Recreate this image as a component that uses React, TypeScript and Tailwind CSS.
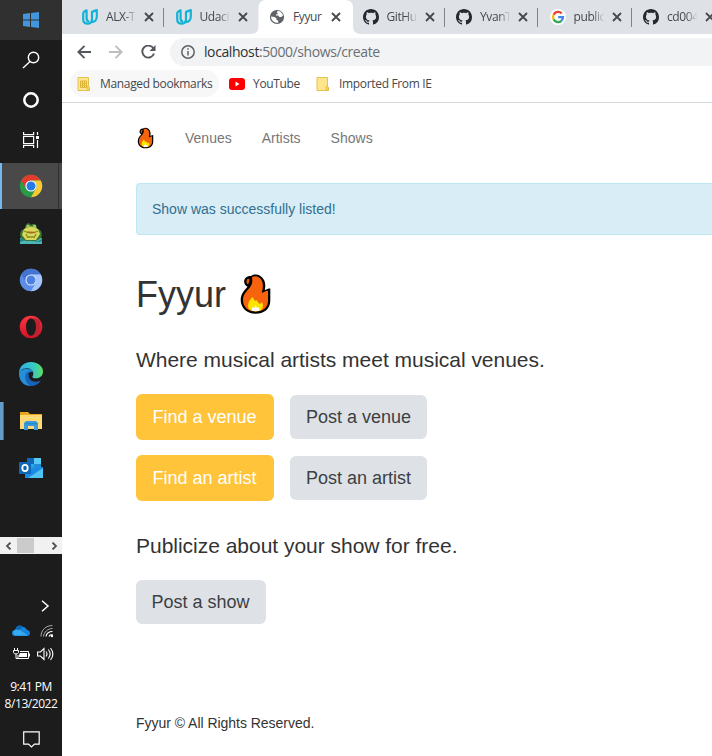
import React from "react";

const ui = "font-['Open_Sans',sans-serif]";

function Udacity() {
  return (
    <svg width="16" height="16" viewBox="0 0 16 16" fill="none" stroke="#15b2d8" strokeWidth="2.2" strokeLinejoin="round">
      <path d="M1.200 3.300 4.600 1.300v8.200q0 2.700 2.600 3.400" />
      <path d="M1.200 3.300v6.700q0 4.700 4.300 4.700c3.200 0 4.500-2 4.500-5V2.900l4.800-1.800v6.500c0 3.500-2.200 5.600-5.400 5.500" />
    </svg>
  );
}

function Github() {
  return (
    <svg width="16" height="16" viewBox="0 0 16 16" fill="#24292f">
      <path d="M8 0C3.58 0 0 3.58 0 8c0 3.54 2.29 6.53 5.47 7.59.4.07.55-.17.55-.38 0-.19-.01-.82-.01-1.49-2.01.37-2.53-.49-2.69-.94-.09-.23-.48-.94-.82-1.13-.28-.15-.68-.52-.01-.53.63-.01 1.08.58 1.23.82.72 1.21 1.87.87 2.33.66.07-.52.28-.87.51-1.07-1.78-.2-3.64-.89-3.64-3.95 0-.87.31-1.59.82-2.15-.08-.2-.36-1.02.08-2.12 0 0 .67-.21 2.2.82.64-.18 1.32-.27 2-.27s1.36.09 2 .27c1.53-1.04 2.2-.82 2.2-.82.44 1.1.16 1.92.08 2.12.51.56.82 1.27.82 2.15 0 3.07-1.87 3.75-3.65 3.95.29.25.54.73.54 1.48 0 1.07-.01 1.93-.01 2.2 0 .21.15.46.55.38A8.01 8.01 0 0 0 16 8c0-4.42-3.58-8-8-8Z" />
    </svg>
  );
}

function Globe() {
  return (
    <svg width="16" height="16" viewBox="0 0 16 16">
      <circle cx="8" cy="8" r="7.100" fill="#5f6368" />
      <path d="M8 2.600 9.400 1.900c2.600.5 4.200 2.300 4.600 4.600l-1.600 1.500-2-.1-1.200-1.400H7V5.200h1.700V4L8 3.700Z" fill="#fff" />
      <path d="M2 7.600 5.500 8l2 1.500v1.400l1.700.5v2.400c-3.900.5-7.100-2.200-7.200-6.200Z" fill="#fff" />
    </svg>
  );
}

function Google() {
  return (
    <svg width="16" height="16" viewBox="0 0 16 16">
      <circle cx="8" cy="8" r="8" fill="#fff" />
      <g fill="none" strokeWidth="2.3">
        <path d="M11.7 4.4A5 5 0 0 0 3.600 5.700" stroke="#ea4335" />
        <path d="M3.600 5.700a5 5 0 0 0 0 4.700" stroke="#fbbc05" />
        <path d="M3.600 10.400a5 5 0 0 0 7.800 1.400" stroke="#34a853" />
        <path d="M11.400 11.800A5 5 0 0 0 13 8.100H8.200" stroke="#4285f4" />
      </g>
    </svg>
  );
}

function Close() {
  return (
    <svg className="shrink-0" width="10" height="10" viewBox="0 0 10 10" stroke="#45494d" strokeWidth="1.8">
      <path d="m1 1 8 8M9 1 1 9" />
    </svg>
  );
}

type TabProps = { icon: React.ReactNode; title: string; active?: boolean; divider?: boolean };

function Tab({ icon, title, active, divider }: TabProps) {
  return (
    <div className="relative flex h-[34px] w-[93.5px] shrink-0 items-center pl-[11.5px]">
      {active && (
        <svg className="absolute -left-[7px] top-0" width="110" height="34" viewBox="0 0 110 34" fill="#fff">
          <path d="M0 34q7.500 0 7.500-8V8q0-8 8-8H94q8 0 8 8v18q0 8 8 8Z" />
        </svg>
      )}
      <div className="relative shrink-0">{icon}</div>
      <div className="relative ml-2 w-[31px] shrink-0">
        <div className={"w-[31px] whitespace-nowrap text-[12px] tracking-[-0.4px] text-[#45494d]" + (active ? "" : " [mask-image:linear-gradient(to_right,#000_60%,transparent_98%)]")}>{title}</div>
      </div>
      <div className="relative ml-[7px] flex shrink-0"><Close /></div>
      {divider && <div className="absolute right-0 top-[8px] h-[19px] w-px bg-[#808389]" />}
    </div>
  );
}

function Note({ grid }: { grid?: boolean }) {
  return (
    <svg className="shrink-0" width="14" height="16" viewBox="0 0 14 16">
      <path d="M1 1.500h10.500v9l1 1v3H1Z" fill="#ffe58c" stroke="#e5c14f" />
      <path d="M10 14v-3.500q1.500-1 2.500 1V14Z" fill="#f9d667" stroke="#e0b83d" strokeWidth=".7" />
      {grid && <path d="M3.500 5h6v6.500h-6Zm0 2.200h6m-6 2.200h6M5.500 5v6.500m2-6.500v6.500" fill="none" stroke="#dfb43a" />}
    </svg>
  );
}

function Flame({ className }: { className: string }) {
  return (
    <svg className={className} viewBox="0 0 32 42" strokeLinejoin="round">
      <path d="M11.500 3C16 0 22 2 24.500 7c1.500 3 1.500 6 .8 10.200 2-1.200 3.400-1.700 5.500-1.700V28c0 8-6.500 12.800-14.800 12.800S1.200 35 1.200 27c0-6 3.600-9.500 6.800-13.200C4.500 12.500 3.800 8 5.500 5.500 7 3.500 9 3 11.500 3Z" fill="#000" />
      <path d="M12.500 4c4-1.700 8.200.2 10 4 1.600 3.700.7 8-.2 12 2.200-1.200 3.900-2 6.200-2.300V28c0 6.500-5.200 10.500-12.500 10.500S3.500 34 3.500 27c0-5.500 3.400-8.500 6.500-12 2.500-3 3.300-5.500 2.500-11Z" fill="#f7630c" />
      <path d="M7.500 6.500C8.500 5.500 10 5.200 10 6.500c0 2-.5 3.500-1.500 5C6.700 10.500 6.500 8 7.500 6.500Z" fill="#d9560d" />
      <path d="M9 35.500c-1.300-4.500.7-8.500 4-11.500l2.500 4 1.500-1 2 3 1.500 1 2-2c2 4 .5 7-1.500 8.500-4 1.500-8.500.8-12-2Z" fill="#fde300" />
      <path d="m12 37.500 1-3.500 1.700 1 1.300-3 1.500 3 1.500-1 1 3.500q-4 1.500-8 0" fill="#fff" />
    </svg>
  );
}

function Chrome({ blue }: { blue?: boolean }) {
  return (
    <svg width="24" height="24" viewBox="0 0 24 24">
      <circle cx="12" cy="12" r="11.200" fill={blue ? "#5b8ce6" : "#2a9c48"} />
      <path d="M2.300 6.400A11.200 11.200 0 0 1 21.700 6.400H12A5.600 5.600 0 0 0 7.150 14.800Z" fill={blue ? "#4474d2" : "#e33b2e"} />
      <path d="M21.700 6.400A11.200 11.200 0 0 1 12 23.200L16.850 14.800A5.600 5.600 0 0 0 12 6.400Z" fill={blue ? "#a5c6fa" : "#fcc934"} />
      <circle cx="12" cy="12" r="5.600" fill={blue ? "#dce9ff" : "#fff"} />
      <circle cx="12" cy="12" r="4.500" fill={blue ? "#4b80df" : "#2779e7"} />
    </svg>
  );
}

function Frog() {
  return (
    <svg width="24" height="24" viewBox="0 0 24 24">
      <path d="M1 17h22v6H1Z" fill="#4bb7b5" />
      <path d="M1 18q5-3 10 1t12-1v2q-6 2-11 0T1 21Z" fill="#247f8b" />
      <path d="M2 17c-2-5 0-9 4-9 0-6 4-7 6-4 4-3 6 0 6 4 4 0 6 4 4 9l-5 3H7Z" fill="#3c7739" />
      <path d="M5 8q7-5 14 0l2 5-4 6H7l-4-5Z" fill="#d8d859" />
      <path d="M5 10q7 4 14 0M7 13l2 4m8-4-2 4m-6-1h6" fill="none" stroke="#8a8d27" strokeWidth="1.300" />
      <circle cx="9" cy="5.500" r="1.700" fill="#acc65e" />
      <circle cx="15.500" cy="5.500" r="1.700" fill="#acc65e" />
      <path d="m8 11 8 .3" stroke="#ad5327" />
    </svg>
  );
}

function Opera() {
  return (
    <svg width="24" height="24" viewBox="0 0 24 24">
      <defs><linearGradient id="op" x2="0" y2="1"><stop stopColor="#ff3444" /><stop offset="1" stopColor="#d01425" /></linearGradient></defs>
      <circle cx="12" cy="12" r="11.300" fill="url(#op)" />
      <path d="M14 3.500c3-1 5 0 7 3q1.500 5.500 0 11c-2 3-4 4-7 3Z" fill="#c0222f" />
      <ellipse cx="12" cy="12" rx="5" ry="8.800" fill="#1c1c1c" />
    </svg>
  );
}

function Edge() {
  return (
    <svg width="26" height="26" viewBox="0 0 24 24">
      <defs>
        <linearGradient id="ea"><stop stopColor="#30aee5" /><stop offset=".6" stopColor="#36cac7" /><stop offset="1" stopColor="#61dc5b" /></linearGradient>
        <linearGradient id="eb" x2="0" y2="1"><stop stopColor="#228fdc" /><stop offset="1" stopColor="#114a9c" /></linearGradient>
      </defs>
      <path d="M1 11C1 5 6 1 12 1c7 0 12 5 11 10-1 4-4 5-7 5-3 0-3-1-2-3 1-4-3-7-7-6-3 0-5 2-6 4Z" fill="url(#ea)" />
      <path d="M1 11c2-5 11-5 13-1-5-1-7 4-4 8 2 3 7 3 11 0-2 3-5 5-9 5C5 23 1 18 1 11Z" fill="url(#eb)" />
      <path d="M9 10c-5 4-2 11 3 13 4 0 7-2 9-5-6 3-12 0-11-5Z" fill="#1763b7" />
      <path d="M1 11c2-3 6-4 9-2-3 1-4 4-3 8 1 3 2 5 5 6C5 23 1 18 1 11Z" fill="#278fd9" />
    </svg>
  );
}

function Folder() {
  return (
    <svg width="24" height="24" viewBox="0 0 24 24">
      <path d="M1 3h8l2 2h12v4H1Z" fill="#e8a61b" />
      <path d="M1 6h22v14H1Z" fill="#ffd974" />
      <path d="M5 21v-7l2-2h10l2 2v7h-4v-4H9v4Z" fill="#3b9ade" />
      <path d="M6 14h12v1.200H6Z" fill="#2d88c6" />
    </svg>
  );
}

function Outlook() {
  return (
    <svg width="26" height="24" viewBox="0 0 26 24">
      <path d="M9 2h14v13H9Z" fill="#28a8ea" />
      <path d="M9 2h7v6H9Z" fill="#1267b4" />
      <path d="M16 2h7v6h-7Z" fill="#57caf5" />
      <path d="M16 8h7v6h-7Z" fill="#238ed7" />
      <path d="M7 12 25 11v11H7Z" fill="#1a8be0" />
      <path d="M10 22 25 12v10Z" fill="#50c3f2" />
      <path d="M1 6h12v12H1Z" fill="#0e68b9" />
      <ellipse cx="7" cy="12" rx="2.700" ry="3.200" fill="none" stroke="#fff" strokeWidth="1.800" />
    </svg>
  );
}

function AppSlot({ children, state }: { children: React.ReactNode; state?: "active" | "open" }) {
  return (
    <div className={"relative mb-px flex h-[46px] shrink-0 items-center justify-center " + (state === "active" ? "bg-[#494949]" : "")}>
      {state === "active" && <><i className="absolute left-0 top-0 h-full w-[2px] bg-[#76b9ed]" /><i className="absolute right-[3px] top-0 h-full w-px bg-[#303030]" /></>}
      {state === "open" && <><i className="absolute left-0 top-[4px] h-[38px] w-[3px] bg-[#659bc7]" /><i className="absolute left-[3px] top-[4px] h-[38px] w-px bg-[#3b6e99]" /></>}
      {children}
    </div>
  );
}

function Taskbar() {
  return (
    <aside className={"flex h-[756px] w-[62px] shrink-0 flex-col bg-[#1c1c1c] text-white " + ui}>
      <div className="flex h-10 shrink-0 items-center justify-center bg-[#303030]">
        <svg width="16" height="16" viewBox="0 0 16 16" fill="#4296df"><path d="m0 2 7-.9v6.400H0ZM8 1l8-1v7.500H8ZM0 8.500h7v6.400L0 14Zm8 0h8V16l-8-1Z" /></svg>
      </div>
      <div className="flex h-10 shrink-0 items-center justify-center">
        <svg width="18" height="18" viewBox="0 0 18 18" fill="none" stroke="#fff" strokeWidth="1.400"><circle cx="11.500" cy="6.500" r="5.200" /><path d="M8 10.500 1 17" /></svg>
      </div>
      <div className="flex h-10 shrink-0 items-center justify-center">
        <svg width="16" height="16" viewBox="0 0 16 16" fill="none" stroke="#fff" strokeWidth="2.500"><circle cx="8" cy="8" r="6.700" /></svg>
      </div>
      <div className="mb-[3px] flex h-10 shrink-0 items-center justify-center">
        <svg width="16" height="16" viewBox="0 0 16 16" fill="none" stroke="#fff" strokeWidth="1.200"><path d="M.6 0v2.600h10V0M.6 16v-2.600h10V16M.6 4.500h10v7H.6ZM14.500 0v3m0 5v8" /><path d="M13 4h3v3h-3Z" fill="#fff" stroke="none" /></svg>
      </div>
      <AppSlot state="active"><Chrome /></AppSlot>
      <AppSlot><Frog /></AppSlot>
      <AppSlot><Chrome blue /></AppSlot>
      <AppSlot><Opera /></AppSlot>
      <AppSlot><Edge /></AppSlot>
      <AppSlot state="open"><Folder /></AppSlot>
      <AppSlot><Outlook /></AppSlot>
      <div className="mt-[45px] flex h-[17px] shrink-0 items-center bg-[#f1f1f1]">
        <svg className="ml-[5px]" width="7" height="8" viewBox="0 0 7 8" fill="none" stroke="#505050" strokeWidth="1.800"><path d="M5.500.5 2 4l3.500 3.500" /></svg>
        <div className="ml-[5px] h-[15px] w-[17px] bg-[#cbcbcb]" />
        <svg className="ml-[17px]" width="7" height="8" viewBox="0 0 7 8" fill="none" stroke="#505050" strokeWidth="1.800"><path d="M1.500.5 5 4 1.500 7.500" /></svg>
      </div>
      <svg className="ml-[41px] mt-[46px] shrink-0" width="9" height="12" viewBox="0 0 9 12" fill="none" stroke="#fff" strokeWidth="1.500"><path d="m1 .8 6 5.200-6 5.200" /></svg>
      <div className="ml-[12px] mt-[11px] flex h-[16px] shrink-0 items-center gap-[10px]">
        <svg width="18" height="12" viewBox="0 0 18 12"><path d="M3 11a3 3 0 0 1 0-6C4 1 8-1 11 2c2 0 3 1 4 3 4 0 4 6 0 6Z" fill="#1683d8" /><path d="m3 5 4-.5 9 6H3a3 3 0 0 1 0-5.500Z" fill="#35a9ef" /><path d="M4 4C5 0 9 0 11 2L7 5Z" fill="#0868b5" /></svg>
        <svg width="14" height="14" viewBox="0 0 14 14" fill="none"><path d="M1 12.500C1 6 6 1.500 12.500 1.500M3.500 12.500C4 8 8 4.500 12.500 4.500" stroke="#aaa" /><path d="M6 12.500c.5-3 3-5 6.500-5M9 12.500c.5-1.500 1.500-2 3.500-2" stroke="#fff" strokeWidth="1.200" /><circle cx="12" cy="12" r="1.200" fill="#fff" /></svg>
      </div>
      <div className="ml-[13px] mt-[7px] flex h-[16px] shrink-0 items-center gap-[7px]">
        <svg width="17" height="12" viewBox="0 0 17 12" fill="none" stroke="#fff"><path d="M1.500 0v2m3-2v2M.5 2.500h5v2Q5 6 3 6T.5 4.500ZM3 6v4.500h2M7 3.500h8.500v7H5V7" /><path d="M7 5h7v4H6V7Z" fill="#fff" stroke="none" /><path d="M16.500 5.500v3" /></svg>
        <svg width="17" height="14" viewBox="0 0 17 14" fill="none" stroke="#fff" strokeWidth="1.100"><path d="M.6 5h2.800L7 1.500v11L3.400 9H.6ZM9 4.500q2 2.500 0 5M11.300 2.500q3.700 4.500 0 9M13.500 1q4.800 6 0 12" /></svg>
      </div>
      <div className="mt-[16px] shrink-0 whitespace-nowrap text-center text-[12px] leading-[17px] tracking-[-0.45px]">
        <div>9:41 PM</div><div>8/13/2022</div>
      </div>
      <svg className="ml-[23px] mt-[19px] shrink-0" width="17" height="17" viewBox="0 0 17 17" fill="none" stroke="#fff" strokeWidth="1.200"><path d="M.7.8h15.500v12.300h-4.700L8.500 16l-3-2.900H.7Z" /></svg>
    </aside>
  );
}

function BrowserChrome() {
  return (
    <header className={"flex h-[103px] shrink-0 flex-col border-b border-[#d5d7da] bg-white " + ui}>
      <div className="flex h-[34px] shrink-0 bg-[#dee1e6] pl-[8.5px]">
        <Tab icon={<Udacity />} title="ALX-T" divider />
        <Tab icon={<Udacity />} title="Udaci" />
        <Tab icon={<Globe />} title="Fyyur" active />
        <Tab icon={<Github />} title="GitHu" divider />
        <Tab icon={<Github />} title="YvanT" divider />
        <Tab icon={<Google />} title="public" divider />
        <Tab icon={<Github />} title="cd004" />
      </div>
      <div className="flex h-9 shrink-0 items-center pl-[15px]">
        <svg width="14" height="14" viewBox="0 0 14 14" fill="none" stroke="#54585d" strokeWidth="1.900"><path d="M14 7H1.500M7.500.8 1.300 7l6.200 6.200" /></svg>
        <svg className="ml-[18px]" width="14" height="14" viewBox="0 0 14 14" fill="none" stroke="#bcbec0" strokeWidth="1.900"><path d="M0 7h12.500M6.500.8 12.700 7l-6.200 6.200" /></svg>
        <svg className="ml-[18px]" width="15" height="14" viewBox="0 0 15 14" fill="none" stroke="#54585d" strokeWidth="1.900"><path d="M12.500 3.600A6 6 0 1 0 13 8.500" /><path d="M14.500 0v6h-6Z" fill="#54585d" stroke="none" /></svg>
        <div className="ml-[14px] flex h-7 grow items-center rounded-l-full bg-[#f1f3f4] pl-[11px]">
          <svg width="14" height="14" viewBox="0 0 14 14" fill="none" stroke="#5f6368" strokeWidth="1.500"><circle cx="7" cy="7" r="6.200" /><path d="M7 6v4.500M7 3.300v1.500" /></svg>
          <div className="ml-[9px] whitespace-nowrap text-[14px] leading-5 tracking-[-0.41px] text-[#6b6f73]"><span className="text-[#303134]">localhost</span>:5000/shows/create</div>
        </div>
      </div>
      <div className="ml-2 flex h-[27px] shrink-0 items-center whitespace-nowrap text-[12px] tracking-[-0.33px] text-[#45494d]">
        <div className="flex h-[27px] w-[149px] items-center rounded-full bg-[#f7f7f8] pl-[7px]">
          <Note grid /><span className="ml-[9px]">Managed bookmarks</span>
        </div>
        <div className="flex w-[97px] items-center pl-[10px]">
          <svg width="16" height="12" viewBox="0 0 16 12"><rect width="16" height="12" rx="3" fill="#f00" /><path d="m6.500 3.500 4 2.500-4 2.500Z" fill="#fff" /></svg>
          <span className="ml-[8px]">YouTube</span>
        </div>
        <Note /><span className="ml-[9px]">Imported From IE</span>
      </div>
    </header>
  );
}

function Find({ children }: { children: string }) {
  return <button className="h-[46px] w-[138px] shrink-0 rounded-[6px] bg-[#ffc439] pr-px text-[18px] text-white">{children}</button>;
}

function Post({ children, className }: { children: string; className: string }) {
  return <button className={"h-[44px] shrink-0 rounded-[6px] bg-[#dee2e6] text-[18px] text-[#3b3f43] " + className}>{children}</button>;
}

export default function App() {
  return (
    <div className="flex h-[756px] w-[712px] overflow-hidden bg-white">
      <Taskbar />
      <div className="flex w-[650px] shrink-0 flex-col overflow-hidden">
        <BrowserChrome />
        <main className="flex grow flex-col whitespace-nowrap pl-[74px] font-['Liberation_Sans',Arial,sans-serif] text-[14px] text-[#333]">
          <nav className="mt-[20px] flex h-[30px] items-center text-[#777]">
            <Flame className="ml-px h-[22px] w-[17px]" />
            <span className="ml-[31px]">Venues</span>
            <span className="ml-[30px]">Artists</span>
            <span className="ml-[30px]">Shows</span>
          </nav>
          <div className="mt-[30px] flex h-[52px] items-center rounded-l border border-r-0 border-[#bce8f1] bg-[#d9edf7] pl-[15px] text-[#31708f]">Show was successfully listed!</div>
          <h1 className="mt-[38px] flex h-[42px] items-center text-[36px] leading-[42px]"><span className="pt-[2px]">Fyyur</span><Flame className="ml-[13px] h-[42px] w-[33px]" /></h1>
          <p className="mt-[30px] h-[30px] text-[21px] leading-[30px] tracking-[-0.02px]">Where musical artists meet musical venues.</p>
          <div className="mt-[19px] flex items-center gap-4"><Find>Find a venue</Find><Post className="w-[137px]">Post a venue</Post></div>
          <div className="mt-[15px] flex items-center gap-4"><Find>Find an artist</Find><Post className="w-[137px]">Post an artist</Post></div>
          <p className="mt-[30px] h-[30px] text-[21px] leading-[30px] tracking-[-0.02px]">Publicize about your show for free.</p>
          <Post className="mt-[19px] w-[130px] pr-px">Post a show</Post>
          <footer className="mt-[89px] leading-5 tracking-[-0.03px]">Fyyur © All Rights Reserved.</footer>
        </main>
      </div>
    </div>
  );
}
